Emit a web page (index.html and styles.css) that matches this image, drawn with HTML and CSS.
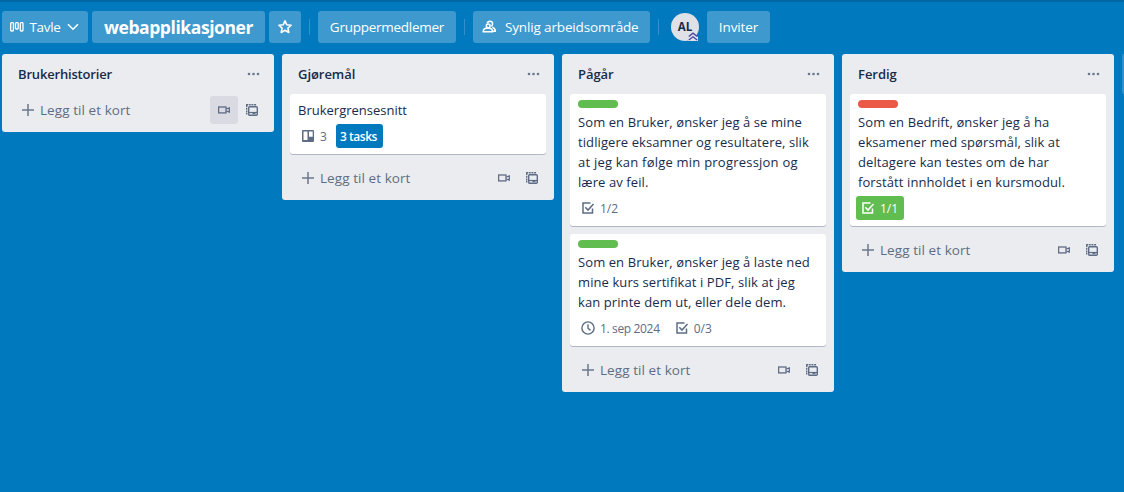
FILE: index.html
```html
<!DOCTYPE html>
<html lang="no">
<head>
<meta charset="utf-8">
<title>webapplikasjoner</title>
<link rel="stylesheet" href="styles.css">
</head>
<body>
<svg class="defs" width="0" height="0">
  <symbol id="plus" viewBox="0 0 12 12"><path d="M6 0v12M0 6h12" stroke="currentColor" stroke-width="1.5"/></symbol>
  <symbol id="dots" viewBox="0 0 12 4"><g fill="currentColor"><circle cx="1.5" cy="2" r="1.3"/><circle cx="6" cy="2" r="1.3"/><circle cx="10.5" cy="2" r="1.3"/></g></symbol>
  <symbol id="video" viewBox="0 0 12 12"><g fill="none" stroke="currentColor" stroke-width="1.3"><rect x=".6" y="3" width="7.4" height="5.9"/><path d="M8.2 5l3.1-1v4l-3.1-1"/></g></symbol>
  <symbol id="template" viewBox="0 0 12 12"><g fill="none" stroke="currentColor"><path d="M0 .7h10.500" stroke-width="1.4" stroke-dasharray="2 .7"/><path d="M.7 1v9.500" stroke-width="1.4" stroke-dasharray="2 .7"/><rect x="2.700" y="2.700" width="8.600" height="8.600" rx="1" stroke-width="1.400"/><path d="M3 8.500h8" stroke-width="1.200"/></g><path d="M6.500 8.500h3v1.700h-3z" fill="currentColor"/></symbol>
  <symbol id="check" viewBox="0 0 14 14"><path d="M9.500 2H2v10h9.500V7.500M4.300 6.300l2.700 2.800L12.500 3" fill="none" stroke="currentColor" stroke-width="1.5"/></symbol>
  <symbol id="clock" viewBox="0 0 14 14"><g fill="none" stroke="currentColor" stroke-width="1.4"><circle cx="7" cy="7" r="6.100"/><path d="M7 3.200v4l2.500 2.200"/></g></symbol>
  <symbol id="board" viewBox="0 0 12 12"><path fill="currentColor" fill-rule="evenodd" d="M1 0h10a1 1 0 0 1 1 1v10a1 1 0 0 1-1 1H1a1 1 0 0 1-1-1V1a1 1 0 0 1 1-1zM1.500 1.500v8.500h4V1.500zM7 1.500v5.200h3.700V1.500z"/></symbol>
</svg>

<header class="bar">
  <button class="btn view">
    <svg width="14" height="10" viewBox="0 0 14 10" fill="none" stroke="currentColor" stroke-width="1.300"><rect x=".7" y=".7" width="2.700" height="8.300" rx=".8"/><rect x="5.500" y=".7" width="2.700" height="6.300" rx=".8"/><rect x="10.300" y=".7" width="2.700" height="8.300" rx=".8"/></svg>
    <span class="t-tavle">Tavle</span>
    <svg class="chev" width="12" height="8" viewBox="0 0 12 8"><path d="M1 1.200l5 5 5-5" fill="none" stroke="currentColor" stroke-width="1.600"/></svg>
  </button>
  <h1 class="btn title"><span>webapplikasjoner</span></h1>
  <button class="btn star"><svg width="16" height="16" viewBox="0 0 16 16"><path d="M8 1.800l1.800 4 4.300.45-3.200 2.900.9 4.300L8 11.300l-3.800 2.150.9-4.300L1.900 6.250l4.300-.45z" fill="none" stroke="currentColor" stroke-width="1.600" stroke-linejoin="round"/></svg></button>
  <i class="sep"></i>
  <button class="btn members"><span>Gruppermedlemer</span></button>
  <i class="sep"></i>
  <button class="btn visible">
    <svg width="15" height="14" viewBox="0 0 15 14" fill="none" stroke="currentColor" stroke-width="1.500"><circle cx="6.200" cy="5.900" r="1.900"/><path d="M1.200 11.800c0-2.400 1.600-3.500 3.700-3.500h2c2.200 0 3.600 1.200 3.600 3.500z"/><path d="M5.200 3.300C5.500 1.900 6.600 1.200 7.900 1.200c1.600 0 2.700 1.100 2.700 2.500 0 1.100-.5 2-1.300 2.600M10.300 7.200c2 .5 3 1.900 3 4.100H11"/></svg>
    <span>Synlig arbeidsområde</span>
  </button>
  <i class="sep"></i>
  <div class="avatar"><span>AL</span><svg class="rank" width="10" height="9" viewBox="0 0 10 9"><path d="M0 5L5 .5 10 5v4H0z" fill="#dfe1e6"/><path d="M.8 4.500L5 1.200l4.200 3.300M.8 8.100L5 4.800l4.200 3.300" fill="none" stroke="#4c43a5" stroke-width="1.300"/></svg></div>
  <button class="btn invite"><span>Inviter</span></button>
</header>

<main class="lists">
  <section class="list">
    <div class="head"><h2 class="h-bruker">Brukerhistorier</h2><svg width="13" height="4"><use href="#dots"/></svg></div>
    <div class="foot"><svg width="12" height="12"><use href="#plus"/></svg><span class="add">Legg til et kort</span><span class="act on"><svg width="12" height="12"><use href="#video"/></svg></span><span class="act"><svg width="12" height="12"><use href="#template"/></svg></span></div>
  </section>

  <section class="list">
    <div class="head"><h2>Gjøremål</h2><svg width="13" height="4"><use href="#dots"/></svg></div>
    <article class="card">
      <p class="text plain">Brukergrensesnitt</p>
      <div class="badges"><span class="badge boards"><svg width="12" height="12"><use href="#board"/></svg><span>3</span></span><span class="tasks">3 tasks</span></div>
    </article>
    <div class="foot"><svg width="12" height="12"><use href="#plus"/></svg><span class="add">Legg til et kort</span><span class="act"><svg width="12" height="12"><use href="#video"/></svg></span><span class="act"><svg width="12" height="12"><use href="#template"/></svg></span></div>
  </section>

  <section class="list">
    <div class="head"><h2>Pågår</h2><svg width="13" height="4"><use href="#dots"/></svg></div>
    <article class="card">
      <div class="label"></div>
      <p class="text">Som en Bruker, ønsker jeg å se mine<br>tidligere eksamner og resultatere, slik<br><span class="wide">at jeg kan følge min progressjon og</span><br>lære av feil.</p>
      <div class="badges"><span class="badge"><svg width="14" height="14"><use href="#check"/></svg><span>1/2</span></span></div>
    </article>
    <article class="card">
      <div class="label"></div>
      <p class="text">Som en Bruker, ønsker jeg å laste ned<br>mine kurs sertifikat i PDF, slik at jeg<br>kan printe dem ut, eller dele dem.</p>
      <div class="badges"><span class="badge"><svg width="14" height="14"><use href="#clock"/></svg><span class="date">1. sep 2024</span></span><span class="badge"><svg width="14" height="14"><use href="#check"/></svg><span>0/3</span></span></div>
    </article>
    <div class="foot"><svg width="12" height="12"><use href="#plus"/></svg><span class="add">Legg til et kort</span><span class="act"><svg width="12" height="12"><use href="#video"/></svg></span><span class="act"><svg width="12" height="12"><use href="#template"/></svg></span></div>
  </section>

  <section class="list">
    <div class="head"><h2>Ferdig</h2><svg width="13" height="4"><use href="#dots"/></svg></div>
    <article class="card">
      <div class="label red"></div>
      <p class="text">Som en Bedrift, ønsker jeg å ha<br>eksamener med spørsmål, slik at<br>deltagere kan testes om de har<br>forstått innholdet i en kursmodul.</p>
      <div class="badges"><span class="badge done"><svg width="14" height="14"><use href="#check"/></svg><span>1/1</span></span></div>
    </article>
    <div class="foot"><svg width="12" height="12"><use href="#plus"/></svg><span class="add">Legg til et kort</span><span class="act"><svg width="12" height="12"><use href="#video"/></svg></span><span class="act"><svg width="12" height="12"><use href="#template"/></svg></span></div>
  </section>
  <div class="new-list"></div>
</main>
</body>
</html>
```
FILE: styles.css
```css
* { box-sizing: border-box; }
body {
  margin: 0;
  height: 492px;
  overflow: hidden;
  background: #0079bf;
  color: #172b4d;
  font: 14px/20px "Open Sans", "Noto Sans", sans-serif;
  white-space: nowrap;
}
svg { display: block; flex: none; }
.defs { position: absolute; }
h1, h2, p { margin: 0; }

.bar {
  display: flex;
  align-items: center;
  height: 54px;
  padding: 0 0 2px 2px;
  border-top: 2px solid #0067a3;
}
.btn {
  display: flex;
  align-items: center;
  flex: none;
  height: 32px;
  padding: 0;
  border: 0;
  border-radius: 3px;
  background: #3d99ce;
  color: #fff;
  font: 13.5px/20px "Open Sans", "Noto Sans", sans-serif;
}
.view { width: 86px; padding-left: 8px; }
.t-tavle { margin-left: 5px; width: 32px; letter-spacing: -.35px; }
.chev { margin-left: 6px; }
.title { width: 173px; margin-left: 4px; justify-content: center; font-size: 17.5px; font-weight: 700; letter-spacing: -.42px; }
.star { width: 32px; margin-left: 4px; justify-content: center; }
.sep { flex: none; width: 1px; height: 16px; margin: 0 8px; background: #3390ca; }
.members { width: 138px; justify-content: center; letter-spacing: -.26px; }
.visible { width: 177px; padding-left: 9px; letter-spacing: -.15px; }
.visible span { margin-left: 8px; }
.avatar {
  position: relative;
  display: flex;
  align-items: center;
  justify-content: center;
  width: 28px;
  height: 28px;
  margin: 0 8px 0 4px;
  border-radius: 50%;
  background: #dfe1e6;
  font-size: 11.5px;
  font-weight: 700;
}
.rank { position: absolute; right: 1px; bottom: 0; }
.invite { width: 63px; justify-content: center; letter-spacing: -.1px; }

.lists { display: flex; align-items: flex-start; gap: 8px; padding-left: 2px; }
.list { flex: none; width: 272px; border-radius: 3px; background: #ebecf0; }
.head {
  display: flex;
  align-items: center;
  justify-content: space-between;
  height: 40px;
  padding: 0 14px 0 16px;
  color: #6b778c;
}
.head h2 { color: #172b4d; font-size: 13px; font-weight: 600; line-height: 20px; letter-spacing: -.05px; }
.head .h-bruker { letter-spacing: -.18px; }
.card {
  margin: 0 8px 8px;
  padding: 6px 8px;
  border-radius: 3px;
  background: #fff;
  box-shadow: 0 1px 0 #b0b8c8;
}
.label { width: 40px; height: 8px; margin-bottom: 4px; border-radius: 4px; background: #61bd4f; }
.red { background: #eb5a46; }
.text { margin-bottom: 4px; font-size: 13px; letter-spacing: .09px; }
.plain { letter-spacing: 0; }
.wide { letter-spacing: .22px; }
.badges { display: flex; height: 24px; margin-left: -2px; color: #5e6c84; font-size: 12px; }
.badge { display: flex; align-items: center; height: 24px; margin-right: 4px; padding: 0 6px 0 5px; border-radius: 3px; }
.badge span { margin-left: 5px; padding-top: 1px; }
.badge .date { letter-spacing: -.35px; }
.boards { padding: 0 5px 0 6px; }
.boards span { margin-left: 6px; }
.done { background: #61bd4f; color: #fff; }
.tasks { width: 47px; height: 24px; padding: 1px 0 0 4px; border-radius: 3px; background: #0079bf; color: #fff; font-weight: 600; line-height: 23px; letter-spacing: -.45px; }
.foot { display: flex; align-items: center; height: 38px; padding: 2px 8px 8px 20px; color: #5e6c84; }
.foot > svg { color: #6b778c; }
.add { margin: 0 auto 0 6px; font-size: 13.5px; letter-spacing: .07px; }
.act { display: flex; align-items: center; justify-content: center; width: 28px; height: 28px; border-radius: 3px; }
.on { background: #dadbe2; }
.new-list { flex: 1; min-width: 0; height: 40px; border-radius: 3px 0 0 3px; background: #3390ca; }
```
